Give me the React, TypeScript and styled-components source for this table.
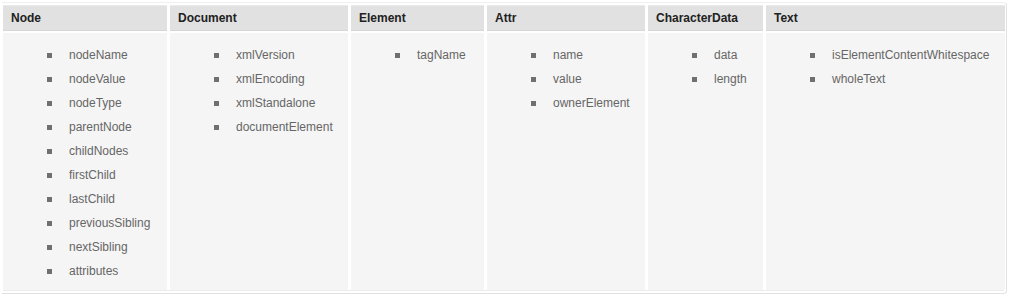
import styled, { createGlobalStyle } from 'styled-components';

const GlobalStyle = createGlobalStyle`
  body {
    margin: 0;
    background: #fff;
    font-family: "Liberation Sans", Arial, sans-serif;
  }
`;

interface Column {
  title: string;
  width: number;
  items: string[];
}

const columns: Column[] = [
  {
    title: 'Node',
    width: 164,
    items: [
      'nodeName', 'nodeValue', 'nodeType', 'parentNode', 'childNodes',
      'firstChild', 'lastChild', 'previousSibling', 'nextSibling', 'attributes',
    ],
  },
  { title: 'Document', width: 178, items: ['xmlVersion', 'xmlEncoding', 'xmlStandalone', 'documentElement'] },
  { title: 'Element', width: 133, items: ['tagName'] },
  { title: 'Attr', width: 158, items: ['name', 'value', 'ownerElement'] },
  { title: 'CharacterData', width: 115, items: ['data', 'length'] },
  { title: 'Text', width: 239, items: ['isElementContentWhitespace', 'wholeText'] },
];

const Frame = styled.div`
  margin: 2px 2px 0 2px;
  width: 1005px;
  height: 292px;
  box-sizing: border-box;
  border-right: 1px solid #e2e2e2;
  border-bottom: 1px solid #e2e2e2;
  border-top: 1px solid #f0f0f0;
  border-radius: 0 4px 4px 0;
  padding: 2px 2px 3px 1px;
  background: #fff;
`;

const Grid = styled.div<{ $cols: string }>`
  display: grid;
  grid-template-columns: ${p => p.$cols};
  grid-template-rows: 26px 1fr;
  column-gap: 3px;
  row-gap: 2px;
  height: 100%;
  border-bottom: 1px solid #ececec;
`;

const HeadCell = styled.div`
  background: #e1e1e1;
  border-top: 1px solid #ebebeb;
  border-bottom: 1px solid #d6d6d6;
  padding: 0 8px;
  display: flex;
  align-items: center;
  font-size: 12px;
  font-weight: bold;
  color: #222;
`;

const BodyCell = styled.div`
  background: #f5f5f5;
  padding: 10px 0 6px 0;
`;

const List = styled.ul`
  list-style: none;
  margin: 0;
  padding: 0 0 0 44px;
`;

const Item = styled.li`
  position: relative;
  padding-left: 22px;
  line-height: 24px;
  font-size: 12px;
  color: #666;
  white-space: nowrap;

  &::before {
    content: '';
    position: absolute;
    left: 0;
    top: 10px;
    width: 5px;
    height: 5px;
    background: #707070;
  }
`;

export default function App() {
  const cols = columns.map(c => `${c.width}px`).join(' ');
  return (
    <>
      <GlobalStyle />
      <Frame>
        <Grid $cols={cols}>
          {columns.map(c => (
            <HeadCell key={c.title}>{c.title}</HeadCell>
          ))}
          {columns.map(c => (
            <BodyCell key={c.title}>
              <List>
                {c.items.map(item => (
                  <Item key={item}>{item}</Item>
                ))}
              </List>
            </BodyCell>
          ))}
        </Grid>
      </Frame>
    </>
  );
}
